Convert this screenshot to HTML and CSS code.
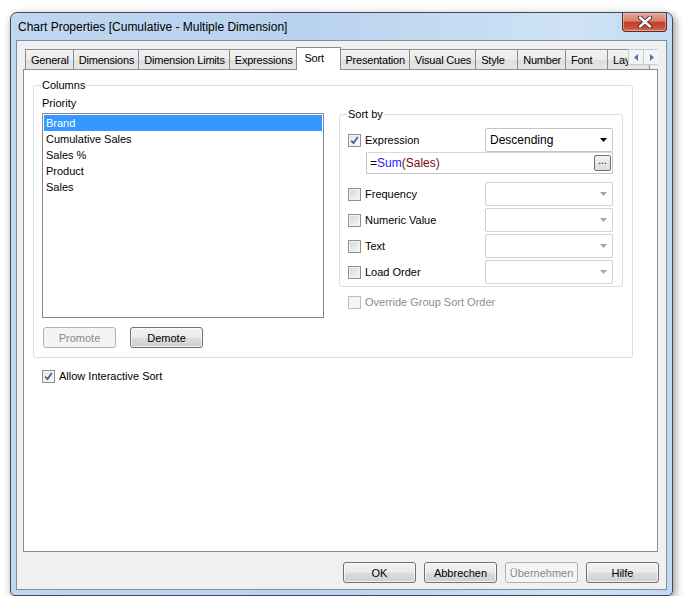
FILE: index.html
```html
<!DOCTYPE html>
<html lang="en">
<head>
    <meta charset="UTF-8">
    <title>Chart Properties</title>
    <link rel="stylesheet" href="styles.css">
</head>
<body>
    <div class="window">
        <div class="titlebar">
            <span class="title">Chart Properties [Cumulative - Multiple Dimension]</span>
            <button class="close">
                <svg width="16" height="12" viewBox="0 0 16 12">
                    <path d="M3 1.5 L13 10.5 M13 1.5 L3 10.5" stroke="#3a2a28" stroke-width="4.2" stroke-linecap="round"/>
                    <path d="M3 1.5 L13 10.5 M13 1.5 L3 10.5" stroke="#ffffff" stroke-width="2.4" stroke-linecap="round"/>
                </svg>
            </button>
        </div>

        <div class="client">
            <div class="tabstrip">
                <span class="tab">General</span>
                <span class="tab">Dimensions</span>
                <span class="tab">Dimension Limits</span>
                <span class="tab">Expressions</span>
                <span class="tab active">Sort</span>
                <span class="tab">Presentation</span>
                <span class="tab">Visual Cues</span>
                <span class="tab">Style</span>
                <span class="tab">Number</span>
                <span class="tab">Font</span>
                <span class="tab">Layout</span>
                <div class="tab-scroll">
                    <span class="arrow"><svg width="5" height="7" viewBox="0 0 5 7"><path d="M4 0 L0 3.5 L4 7 Z" fill="#4a78b8"/></svg></span>
                    <span class="arrow"><svg width="5" height="7" viewBox="0 0 5 7"><path d="M1 0 L5 3.5 L1 7 Z" fill="#4a78b8"/></svg></span>
                </div>
            </div>

            <div class="panel">
                <fieldset class="group columns">
                    <legend>Columns</legend>
                    <div class="columns-grid">
                        <div class="priority">
                            <div class="label">Priority</div>
                            <ul class="listbox">
                                <li class="selected">Brand</li>
                                <li>Cumulative Sales</li>
                                <li>Sales %</li>
                                <li>Product</li>
                                <li>Sales</li>
                            </ul>
                            <div class="move-buttons">
                                <button class="btn" disabled>Promote</button>
                                <button class="btn">Demote</button>
                            </div>
                        </div>

                        <div class="sort-side">
                            <fieldset class="group sortby">
                                <legend>Sort by</legend>
                                <div class="sort-row">
                                    <label class="check"><span class="box checked"><svg width="11" height="11" viewBox="0 0 11 11"><path d="M2.2 5.6 L4.5 8 L8.8 2" fill="none" stroke="#4a6296" stroke-width="1.8"/></svg></span>Expression</label>
                                    <div class="combo">
                                        <span>Descending</span>
                                        <svg width="7" height="4" viewBox="0 0 7 4"><path d="M0 0 L7 0 L3.5 4 Z" fill="#000"/></svg>
                                    </div>
                                </div>
                                <div class="expr-field">
                                    <span class="op">=</span><span class="fn">Sum</span><span class="arg">(Sales)</span>
                                    <button class="dots">...</button>
                                </div>
                                <div class="sort-row first">
                                    <label class="check"><span class="box"></span>Frequency</label>
                                    <div class="combo off"><span></span><svg width="7" height="4" viewBox="0 0 7 4"><path d="M0 0 L7 0 L3.5 4 Z" fill="#a6a6a6"/></svg></div>
                                </div>
                                <div class="sort-row">
                                    <label class="check"><span class="box"></span>Numeric Value</label>
                                    <div class="combo off"><span></span><svg width="7" height="4" viewBox="0 0 7 4"><path d="M0 0 L7 0 L3.5 4 Z" fill="#a6a6a6"/></svg></div>
                                </div>
                                <div class="sort-row">
                                    <label class="check"><span class="box"></span>Text</label>
                                    <div class="combo off"><span></span><svg width="7" height="4" viewBox="0 0 7 4"><path d="M0 0 L7 0 L3.5 4 Z" fill="#a6a6a6"/></svg></div>
                                </div>
                                <div class="sort-row">
                                    <label class="check"><span class="box"></span>Load Order</label>
                                    <div class="combo off"><span></span><svg width="7" height="4" viewBox="0 0 7 4"><path d="M0 0 L7 0 L3.5 4 Z" fill="#a6a6a6"/></svg></div>
                                </div>
                            </fieldset>
                            <label class="check disabled override"><span class="box"></span>Override Group Sort Order</label>
                        </div>
                    </div>
                </fieldset>

                <label class="check allow"><span class="box checked"><svg width="11" height="11" viewBox="0 0 11 11"><path d="M2.2 5.6 L4.5 8 L8.8 2" fill="none" stroke="#4a6296" stroke-width="1.8"/></svg></span>Allow Interactive Sort</label>
            </div>

            <div class="footer">
                <button class="btn">OK</button>
                <button class="btn">Abbrechen</button>
                <button class="btn" disabled>Übernehmen</button>
                <button class="btn">Hilfe</button>
            </div>
        </div>
    </div>
</body>
</html>
```

FILE: styles.css
```css
* {
    box-sizing: border-box;
}

body {
    margin: 0;
    background: #ffffff;
    font-family: 'Liberation Sans', Arial, sans-serif;
    font-size: 11px;
    color: #000000;
}

.window {
    margin: 12px 0 0 10px;
    width: 663px;
    height: 584px;
    border: 1px solid #3d4b5c;
    border-radius: 7px 7px 5px 5px;
    background: linear-gradient(to right, #bed6ef, #b9d2ee 45%, #cfe2f6 85%, #c3daf2);
    padding: 0 5px 5px 5px;
    box-shadow: 2px 3px 9px rgba(0, 0, 0, 0.45);
    display: flex;
    flex-direction: column;
}

.titlebar {
    height: 27px;
    display: flex;
    align-items: flex-start;
}

.title {
    align-self: center;
    padding-left: 2px;
    font-size: 12px;
    color: #000000;
}

.close {
    margin-left: auto;
    width: 45px;
    height: 19px;
    padding: 0;
    border: 1px solid #5e2a22;
    border-top: none;
    border-radius: 0 0 4px 4px;
    background: linear-gradient(#e6a797, #d7806d 45%, #c0402b 52%, #c9533d 85%, #dc7a60);
    box-shadow: inset 0 0 0 1px rgba(255, 220, 210, 0.45);
    display: flex;
    align-items: center;
    justify-content: center;
}

.client {
    flex: 1;
    border: 1px solid #7d8fa3;
    background: #f0f0f0;
    padding: 6px 8px 0 6px;
    display: flex;
    flex-direction: column;
}

/* tabs */
.tabstrip {
    position: relative;
    z-index: 1;
    height: 23px;
    margin-bottom: -1px;
    padding-left: 2px;
    display: flex;
    align-items: flex-start;
    overflow: hidden;
    white-space: nowrap;
}

.tab {
    flex-shrink: 0;
    min-width: 43px;
    margin-top: 2px;
    height: 20px;
    line-height: 21px;
    padding: 0 4px 0 5px;
    letter-spacing: -0.2px;
    border: 1px solid #898c95;
    border-bottom: none;
    margin-left: -1px;
    background: linear-gradient(#f3f3f3, #ebebeb 50%, #dedede 51%, #e6e6e6);
}

.tab:first-child {
    margin-left: 0;
}

.tab.active {
    margin-top: 0;
    min-width: 45px;
    height: 23px;
    line-height: 20px;
    padding: 0 7px;
    margin-right: -1px;
    position: relative;
    background: #ffffff;
}

.tab-scroll {
    position: absolute;
    right: -1px;
    top: 2px;
    display: flex;
}

.arrow {
    width: 16px;
    height: 16px;
    border: 1px solid #c8ccd2;
    background: #f4f4f4;
    display: flex;
    align-items: center;
    justify-content: center;
}

.arrow + .arrow {
    margin-left: -1px;
}

.panel {
    height: 483px;
    border: 1px solid #898c95;
    background: #ffffff;
}

/* group boxes */
.group {
    margin: 0;
    border: 1px solid #d5dfe5;
    border-radius: 3px;
}

.group legend {
    padding: 0 1px;
    margin-left: -1px;
    line-height: 13px;
}

.columns {
    margin: 9px 0 0 9px;
    width: 600px;
    padding: 5px 8px 9px 8px;
}

.columns-grid {
    display: grid;
    grid-template-columns: 282px 284px;
    column-gap: 15px;
}

.label {
    line-height: 13px;
    margin-bottom: 3px;
}

.listbox {
    list-style: none;
    margin: 0;
    height: 205px;
    padding: 1px;
    border: 1px solid #828790;
}

.listbox li {
    height: 16px;
    line-height: 16px;
    padding-left: 2px;
}

.listbox li.selected {
    background: #3399ff;
    color: #ffffff;
}

.move-buttons {
    margin-top: 9px;
    padding-left: 1px;
    display: flex;
    gap: 14px;
}

/* buttons */
.btn {
    width: 73px;
    height: 21px;
    padding: 0;
    font-family: 'Liberation Sans', Arial, sans-serif;
    font-size: 11px;
    color: #000000;
    border: 1px solid #707070;
    border-radius: 3px;
    background: linear-gradient(#f2f2f2, #ebebeb 48%, #dddddd 52%, #cfcfcf);
    box-shadow: inset 0 0 0 1px rgba(255, 255, 255, 0.7);
}

.btn:disabled {
    color: #8a8a8a;
    border-color: #adb2b5;
    background: #f4f4f4;
    box-shadow: none;
}

/* sort by */
.sortby {
    margin-top: 11px;
    padding: 7px 9px 2px 8px;
}

.sort-row {
    height: 24px;
    display: flex;
    align-items: center;
    justify-content: space-between;
    margin-top: 2px;
}

.sort-row:first-of-type {
    margin-top: 0;
}

.sort-row.first {
    margin-top: 8px;
}

.check {
    display: flex;
    align-items: center;
    gap: 4px;
    line-height: 13px;
}

.box {
    width: 13px;
    height: 13px;
    border: 1px solid #8e8f8f;
    background: linear-gradient(135deg, #d4d6d9, #f7f7f7);
    box-shadow: inset 0 0 0 1px #f4f4f4;
    display: flex;
    align-items: center;
    justify-content: center;
}

.box.checked {
    background: linear-gradient(135deg, #e2e4e8, #fbfbfb);
}

.check.disabled {
    color: #8d8d8d;
}

.check.disabled .box {
    border-color: #bcbcbc;
    background: #f4f4f4;
    box-shadow: none;
}

.combo {
    width: 128px;
    height: 24px;
    border: 1px solid #c2c5ca;
    border-radius: 2px;
    background: #ffffff;
    padding: 0 5px 0 4px;
    display: flex;
    align-items: center;
    justify-content: space-between;
    font-size: 12px;
}

.combo.off {
    border-color: #cfd2d6;
}

.expr-field {
    margin-left: 18px;
    height: 22px;
    border: 1px solid #c2c5ca;
    border-top-color: #d5d8dc;
    background: #ffffff;
    padding: 0 1px 0 3px;
    display: flex;
    align-items: center;
    font-size: 12px;
}

.op {
    color: #000000;
}

.fn {
    color: #2020ff;
}

.arg {
    color: #7a0a0a;
}

.dots {
    margin-left: auto;
    width: 17px;
    height: 16px;
    padding: 0 0 4px 0;
    border: 1px solid #707070;
    border-radius: 2px;
    background: linear-gradient(#f2f2f2, #dcdcdc);
    font-family: 'Liberation Sans', Arial, sans-serif;
    font-size: 10px;
    line-height: 10px;
}

.override {
    margin: 9px 0 0 9px;
}

.allow {
    margin: 12px 0 0 18px;
}

/* dialog buttons */
.footer {
    margin-top: 10px;
    margin-right: -1px;
    display: flex;
    justify-content: flex-end;
    gap: 8px;
}
```
